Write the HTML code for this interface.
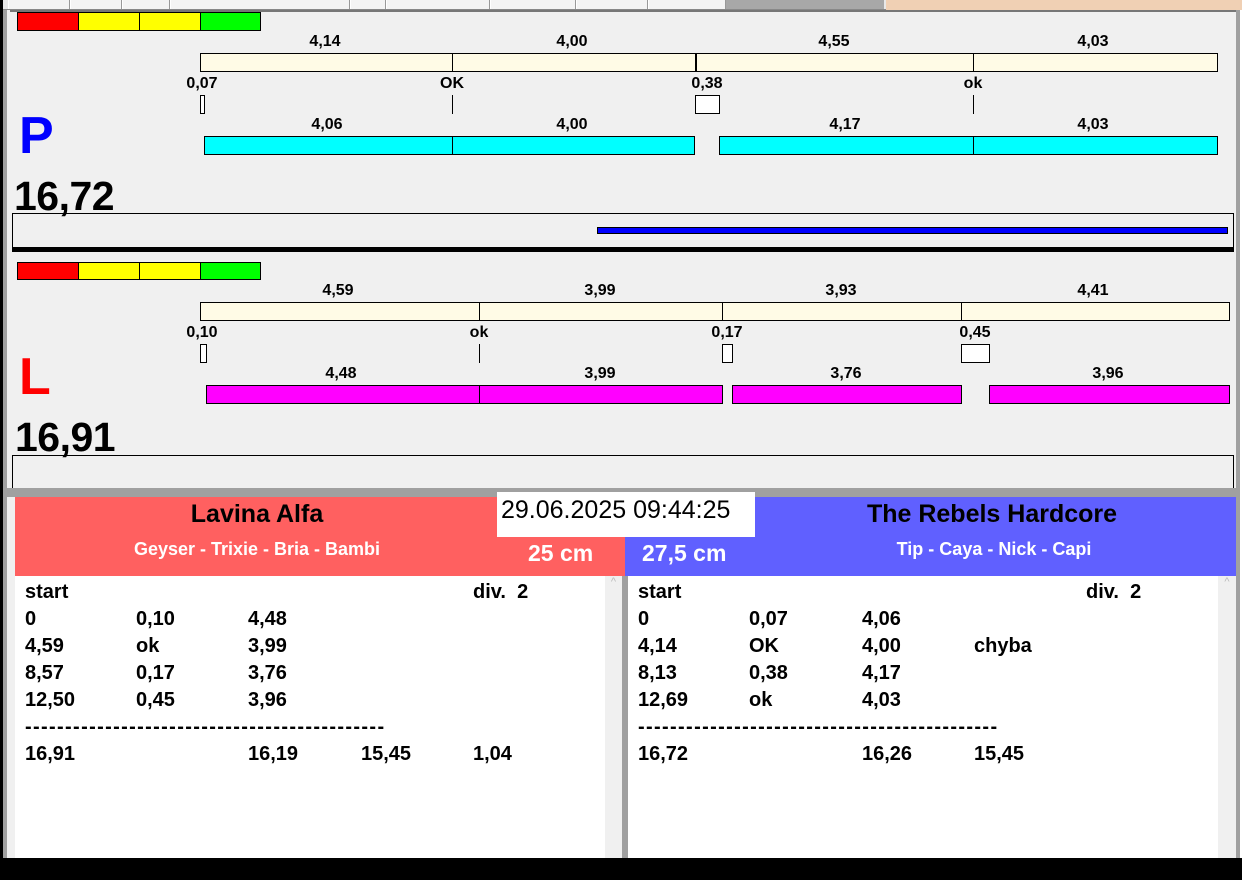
<!DOCTYPE html>
<html><head><meta charset="utf-8"><style>
*{margin:0;padding:0;box-sizing:border-box}
body{width:1242px;height:880px;position:relative;background:#f0f0f0;overflow:hidden;font-family:"Liberation Sans",Arial,sans-serif}
div{position:absolute}
.t{font-weight:bold;font-size:16px;color:#000;transform:translateX(-50%);white-space:nowrap;line-height:18px;margin-top:2px}
.b{border:1px solid #000}
.y{background:#fffbe6}
.c{background:#00ffff}
.m{background:#ff00ff}
.w{background:#fff}
.r{font-weight:bold;font-size:20px;line-height:27px;white-space:nowrap;margin-top:1px}
.tab{top:0;height:9px;background:#f4f4f4;border-right:1px solid #999;border-left:1px solid #fff}
</style></head><body>
<!-- top tab strip -->
<div style="left:0;top:0;width:1242px;height:10px;background:#e8e8e8;border-bottom:1px solid #888"></div>
<div class="tab" style="left:8px;width:62px"></div>
<div class="tab" style="left:70px;width:52px"></div>
<div class="tab" style="left:122px;width:48px"></div>
<div class="tab" style="left:170px;width:180px"></div>
<div class="tab" style="left:350px;width:36px"></div>
<div class="tab" style="left:386px;width:104px"></div>
<div class="tab" style="left:490px;width:86px"></div>
<div class="tab" style="left:576px;width:72px"></div>
<div class="tab" style="left:648px;width:78px"></div>
<div style="left:726px;top:0;width:158px;height:9px;background:#a8a8a8"></div>
<div style="left:886px;top:0;width:356px;height:11px;background:#f0d0b4"></div>
<div style="left:0;top:0;width:3px;height:880px;background:#000"></div>
<div style="left:3px;top:10px;width:4px;height:850px;background:#a0a0a0"></div>
<div style="left:1236px;top:10px;width:4px;height:850px;background:#a0a0a0"></div>
<div style="left:1240px;top:10px;width:2px;height:850px;background:#fff"></div>
<div style="left:10px;top:10px;width:1226px;height:2px;background:#777"></div>

<!-- P panel -->
<div style="left:17px;top:12px;width:62px;height:19px;background:#f00" class="b"></div>
<div style="left:78px;top:12px;width:62px;height:19px;background:#ff0" class="b"></div>
<div style="left:139px;top:12px;width:62px;height:19px;background:#ff0" class="b"></div>
<div style="left:200px;top:12px;width:61px;height:19px;background:#0f0" class="b"></div>
<div class="t" style="left:325px;top:31px">4,14</div>
<div class="t" style="left:572px;top:31px">4,00</div>
<div class="t" style="left:834px;top:31px">4,55</div>
<div class="t" style="left:1093px;top:31px">4,03</div>
<div class="b y" style="left:200px;top:53px;width:1018px;height:19px"></div>
<div style="left:452px;top:53px;width:1px;height:19px;background:#000"></div>
<div style="left:695px;top:53px;width:2px;height:19px;background:#000"></div>
<div style="left:973px;top:53px;width:1px;height:19px;background:#000"></div>
<div class="t" style="left:202px;top:73px">0,07</div>
<div class="t" style="left:452px;top:73px">OK</div>
<div class="t" style="left:707px;top:73px">0,38</div>
<div class="t" style="left:973px;top:73px">ok</div>
<div class="b w" style="left:200px;top:95px;width:5px;height:19px"></div>
<div style="left:452px;top:95px;width:1px;height:19px;background:#000"></div>
<div class="b w" style="left:695px;top:95px;width:25px;height:19px"></div>
<div style="left:973px;top:95px;width:1px;height:19px;background:#000"></div>
<div class="t" style="left:327px;top:114px">4,06</div>
<div class="t" style="left:572px;top:114px">4,00</div>
<div class="t" style="left:845px;top:114px">4,17</div>
<div class="t" style="left:1093px;top:114px">4,03</div>
<div class="b c" style="left:204px;top:136px;width:491px;height:19px"></div>
<div style="left:452px;top:136px;width:1px;height:19px;background:#000"></div>
<div class="b c" style="left:719px;top:136px;width:499px;height:19px"></div>
<div style="left:973px;top:136px;width:1px;height:19px;background:#000"></div>
<div style="left:19px;top:106px;font-size:52px;font-weight:bold;color:#0000ff;line-height:60px">P</div>
<div style="left:14px;top:173px;font-size:41px;font-weight:bold;line-height:46px;letter-spacing:-0.5px">16,72</div>
<div style="left:12px;top:213px;width:1222px;height:36px;border:1px solid #000;border-bottom:none"></div>
<div style="left:597px;top:227px;width:631px;height:7px;background:#0000ff;border:1px solid #000"></div>
<div style="left:12px;top:247px;width:1222px;height:5px;background:#000"></div>

<!-- L panel -->
<div style="left:17px;top:262px;width:62px;height:18px;background:#f00" class="b"></div>
<div style="left:78px;top:262px;width:62px;height:18px;background:#ff0" class="b"></div>
<div style="left:139px;top:262px;width:62px;height:18px;background:#ff0" class="b"></div>
<div style="left:200px;top:262px;width:61px;height:18px;background:#0f0" class="b"></div>
<div class="t" style="left:338px;top:280px">4,59</div>
<div class="t" style="left:600px;top:280px">3,99</div>
<div class="t" style="left:841px;top:280px">3,93</div>
<div class="t" style="left:1093px;top:280px">4,41</div>
<div class="b y" style="left:200px;top:302px;width:1030px;height:19px"></div>
<div style="left:479px;top:302px;width:1px;height:19px;background:#000"></div>
<div style="left:722px;top:302px;width:1px;height:19px;background:#000"></div>
<div style="left:961px;top:302px;width:1px;height:19px;background:#000"></div>
<div class="t" style="left:202px;top:322px">0,10</div>
<div class="t" style="left:479px;top:322px">ok</div>
<div class="t" style="left:727px;top:322px">0,17</div>
<div class="t" style="left:975px;top:322px">0,45</div>
<div class="b w" style="left:200px;top:344px;width:7px;height:19px"></div>
<div style="left:479px;top:344px;width:1px;height:19px;background:#000"></div>
<div class="b w" style="left:722px;top:344px;width:11px;height:19px"></div>
<div class="b w" style="left:961px;top:344px;width:29px;height:19px"></div>
<div class="t" style="left:341px;top:363px">4,48</div>
<div class="t" style="left:600px;top:363px">3,99</div>
<div class="t" style="left:846px;top:363px">3,76</div>
<div class="t" style="left:1108px;top:363px">3,96</div>
<div class="b m" style="left:206px;top:385px;width:517px;height:19px"></div>
<div style="left:479px;top:385px;width:1px;height:19px;background:#000"></div>
<div class="b m" style="left:732px;top:385px;width:230px;height:19px"></div>
<div class="b m" style="left:989px;top:385px;width:241px;height:19px"></div>
<div style="left:19px;top:347px;font-size:52px;font-weight:bold;color:#ff0000;line-height:60px">L</div>
<div style="left:15px;top:414px;font-size:41px;font-weight:bold;line-height:46px;letter-spacing:-0.5px">16,91</div>
<div style="left:12px;top:455px;width:1222px;height:34px;border:1px solid #000;border-bottom:none"></div>

<!-- bottom -->
<div style="left:7px;top:488px;width:1229px;height:9px;background:#a0a0a0"></div>
<div style="left:15px;top:497px;width:610px;height:79px;background:#ff6060"></div>
<div style="left:625px;top:497px;width:611px;height:79px;background:#6060ff"></div>
<div style="left:625px;top:497px;width:130px;height:40px;background:#ff6060"></div>
<div style="left:497px;top:492px;width:258px;height:45px;background:#fff"></div>
<div style="left:501px;top:495px;font-size:25px;line-height:30px">29.06.2025 09:44:25</div>
<div style="left:257px;top:498px;font-size:25px;font-weight:bold;line-height:32px;transform:translateX(-50%);white-space:nowrap">Lavina Alfa</div>
<div style="left:257px;top:538px;font-size:18px;font-weight:bold;color:#fff;line-height:22px;transform:translateX(-50%);white-space:nowrap">Geyser - Trixie - Bria - Bambi</div>
<div style="left:528px;top:539px;font-size:23px;font-weight:bold;color:#fff;line-height:28px">25 cm</div>
<div style="left:992px;top:498px;font-size:25px;font-weight:bold;line-height:32px;transform:translateX(-50%);white-space:nowrap">The Rebels Hardcore</div>
<div style="left:994px;top:538px;font-size:18px;font-weight:bold;color:#fff;line-height:22px;transform:translateX(-50%);white-space:nowrap">Tip - Caya - Nick - Capi</div>
<div style="left:642px;top:539px;font-size:23px;font-weight:bold;color:#fff;line-height:28px">27,5 cm</div>

<div style="left:15px;top:576px;width:590px;height:284px;background:#fff"></div>
<div style="left:605px;top:576px;width:17px;height:284px;background:#f0f0f0;color:#bbb;font-size:11px;text-align:center">^</div>
<div style="left:622px;top:576px;width:6px;height:284px;background:#a0a0a0"></div>
<div style="left:628px;top:576px;width:590px;height:284px;background:#fff"></div>
<div style="left:1218px;top:576px;width:18px;height:284px;background:#f0f0f0;color:#bbb;font-size:11px;text-align:center">^</div>

<div class="r" style="left:25px;top:578px">start</div><div class="r" style="left:473px;top:578px">div.&nbsp; 2</div>
<div class="r" style="left:25px;top:605px">0</div><div class="r" style="left:136px;top:605px">0,10</div><div class="r" style="left:248px;top:605px">4,48</div>
<div class="r" style="left:25px;top:632px">4,59</div><div class="r" style="left:136px;top:632px">ok</div><div class="r" style="left:248px;top:632px">3,99</div>
<div class="r" style="left:25px;top:659px">8,57</div><div class="r" style="left:136px;top:659px">0,17</div><div class="r" style="left:248px;top:659px">3,76</div>
<div class="r" style="left:25px;top:686px">12,50</div><div class="r" style="left:136px;top:686px">0,45</div><div class="r" style="left:248px;top:686px">3,96</div>
<div class="r" style="left:25px;top:713px;letter-spacing:1.35px">---------------------------------------------</div>
<div class="r" style="left:25px;top:740px">16,91</div><div class="r" style="left:248px;top:740px">16,19</div><div class="r" style="left:361px;top:740px">15,45</div><div class="r" style="left:473px;top:740px">1,04</div>

<div class="r" style="left:638px;top:578px">start</div><div class="r" style="left:1086px;top:578px">div.&nbsp; 2</div>
<div class="r" style="left:638px;top:605px">0</div><div class="r" style="left:749px;top:605px">0,07</div><div class="r" style="left:862px;top:605px">4,06</div>
<div class="r" style="left:638px;top:632px">4,14</div><div class="r" style="left:749px;top:632px">OK</div><div class="r" style="left:862px;top:632px">4,00</div><div class="r" style="left:974px;top:632px">chyba</div>
<div class="r" style="left:638px;top:659px">8,13</div><div class="r" style="left:749px;top:659px">0,38</div><div class="r" style="left:862px;top:659px">4,17</div>
<div class="r" style="left:638px;top:686px">12,69</div><div class="r" style="left:749px;top:686px">ok</div><div class="r" style="left:862px;top:686px">4,03</div>
<div class="r" style="left:638px;top:713px;letter-spacing:1.35px">---------------------------------------------</div>
<div class="r" style="left:638px;top:740px">16,72</div><div class="r" style="left:862px;top:740px">16,26</div><div class="r" style="left:974px;top:740px">15,45</div>

<div style="left:0;top:858px;width:1242px;height:22px;background:#000"></div>
</body></html>
